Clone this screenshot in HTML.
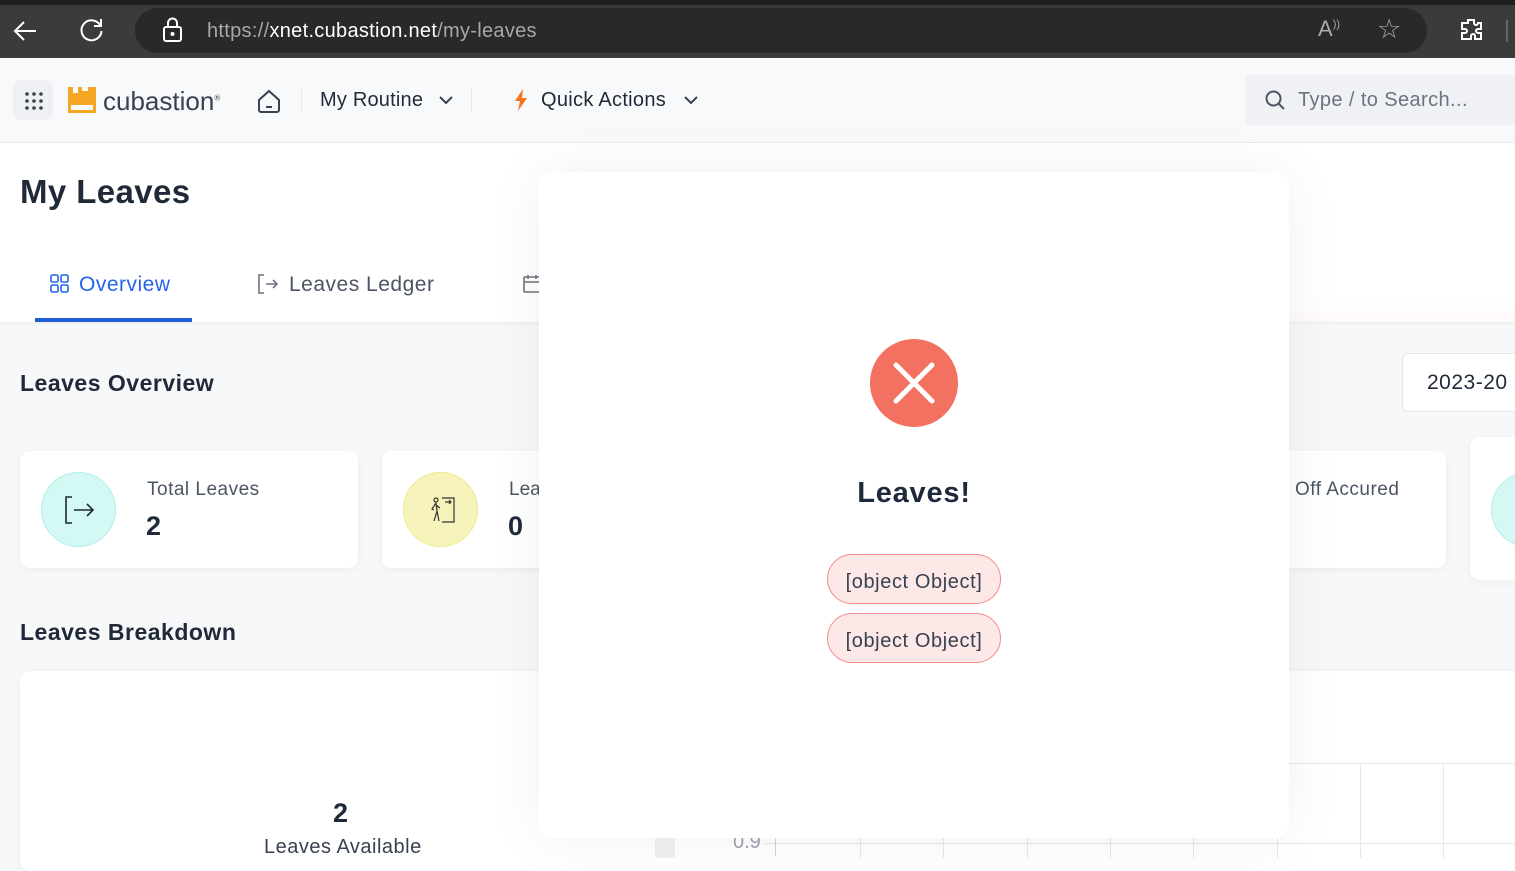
<!DOCTYPE html>
<html><head><meta charset="utf-8"><style>
*{box-sizing:border-box;margin:0;padding:0}
body{width:1515px;height:856px;overflow:hidden;position:relative;font-family:"Liberation Sans",sans-serif;background:#f7f8fa;color:#1f2937}
.abs{position:absolute;white-space:nowrap}
.top{left:0;top:0;width:1515px;height:58px;background:#3b3b3b;border-top:5px solid #1e1e1e}
.pill{left:135px;top:8px;width:1292px;height:45px;border-radius:23px;background:#292929}
.url{left:207px;top:20px;font-size:20px;color:#a8a8a8}
.hdr{left:0;top:58px;width:1515px;height:85px;background:#f8f9fb;border-bottom:1px solid #e5e7eb}
.white{left:0;top:143px;width:1515px;height:179px;background:#fff;box-shadow:0 2px 3px rgba(0,0,0,.04)}
.card{background:#fff;border-radius:10px;box-shadow:0 2px 8px rgba(0,0,0,.05)}
.t{color:#1f2937}
.ls{letter-spacing:.5px}
</style></head><body>
<div class="abs top"></div>
<div class="abs pill"></div>
<svg class="abs" style="left:12px;top:17px" width="28" height="28" viewBox="0 0 28 28" fill="none" stroke="#fff" stroke-width="2"><path d="M24 14H4M12 5l-9 9 9 9"/></svg>
<svg class="abs" style="left:78px;top:16px" width="28" height="28" viewBox="0 0 28 28" fill="none" stroke="#fff" stroke-width="2"><path d="M22 9a10 10 0 1 0 1.5 6"/><path d="M23 3v7h-7"/></svg>
<svg class="abs" style="left:161px;top:17px" width="24" height="26" viewBox="0 0 24 26" fill="none" stroke="#fff" stroke-width="2"><rect x="3" y="10" width="17" height="14" rx="2"/><path d="M7 10V6a4.5 4.5 0 0 1 9 0v4"/><circle cx="11.5" cy="17" r="1" fill="#fff"/></svg>
<div class="abs url" style="letter-spacing:.3px">https://<span style="color:#fff">xnet.cubastion.net</span>/my-leaves</div>
<div class="abs" style="left:1318px;top:16px;color:#aaa;font-size:22px">A<sup style="font-size:11px">))</sup></div>
<div class="abs" style="left:1377px;top:14px;color:#aaa;font-size:27px">☆</div>
<svg class="abs" style="left:1458px;top:16px" width="28" height="28" viewBox="0 0 28 28" fill="none" stroke="#fff" stroke-width="2"><path d="M10 4h6v3a2 2 0 0 0 4 0h3v6h-3a2 2 0 0 0 0 4h3v6h-6v-3a2 2 0 0 0-4 0v3H4v-6h3a2 2 0 0 0 0-4H4V7h6z"/></svg>
<div class="abs" style="left:1506px;top:20px;width:2px;height:22px;background:#666"></div>

<div class="abs hdr"></div>
<div class="abs" style="left:13px;top:80px;width:40px;height:40px;border-radius:8px;background:#eef0f3"></div>
<svg class="abs" style="left:24px;top:91px" width="20" height="20" viewBox="0 0 20 20" fill="#374151"><circle cx="3" cy="3" r="1.8"/><circle cx="10" cy="3" r="1.8"/><circle cx="17" cy="3" r="1.8"/><circle cx="3" cy="10" r="1.8"/><circle cx="10" cy="10" r="1.8"/><circle cx="17" cy="10" r="1.8"/><circle cx="3" cy="17" r="1.8"/><circle cx="10" cy="17" r="1.8"/><circle cx="17" cy="17" r="1.8"/></svg>
<svg class="abs" style="left:68px;top:87px" width="30" height="26" viewBox="0 0 30 26" fill="#f5a623"><path d="M0 0h5v6h5V0h4v4h6V0h8v26H0zM3 18v5h22v-5z" fill-rule="evenodd"/></svg>
<div class="abs" style="left:103px;top:86px;font-size:26px;color:#374151">cubastion<sup style="font-size:8px">®</sup></div>
<svg class="abs" style="left:256px;top:88px" width="26" height="26" viewBox="0 0 26 26" fill="none" stroke="#374151" stroke-width="2"><path d="M3 12l10-9 10 9v10a2 2 0 0 1-2 2H5a2 2 0 0 1-2-2z"/><path d="M10 19h6"/></svg>
<div class="abs" style="left:301px;top:88px;width:1px;height:24px;background:#e5e7eb"></div>
<div class="abs" style="left:320px;top:89px;font-size:20px;color:#1f2937;letter-spacing:.2px">My Routine</div>
<svg class="abs" style="left:438px;top:94px" width="16" height="12" viewBox="0 0 16 12" fill="none" stroke="#374151" stroke-width="2"><path d="M2 3l6 6 6-6"/></svg>
<div class="abs" style="left:471px;top:88px;width:1px;height:24px;background:#e5e7eb"></div>
<svg class="abs" style="left:514px;top:89px" width="14" height="22" viewBox="0 0 14 22" fill="#f97316"><path d="M9 0L1 12h5l-2 10 9-13H8z"/></svg>
<div class="abs" style="left:541px;top:89px;font-size:20px;color:#1f2937;letter-spacing:.3px">Quick Actions</div>
<svg class="abs" style="left:683px;top:94px" width="16" height="12" viewBox="0 0 16 12" fill="none" stroke="#374151" stroke-width="2"><path d="M2 3l6 6 6-6"/></svg>
<div class="abs" style="left:1245px;top:75px;width:280px;height:50px;border-radius:6px;background:#eff1f5"></div>
<svg class="abs" style="left:1263px;top:88px" width="24" height="24" viewBox="0 0 24 24" fill="none" stroke="#4b5563" stroke-width="2"><circle cx="10.5" cy="10.5" r="7"/><path d="M16 16l5 5"/></svg>
<div class="abs" style="left:1298px;top:89px;font-size:20px;color:#6b7280;letter-spacing:.4px">Type / to Search...</div>

<div class="abs white"></div>
<div class="abs t" style="left:20px;top:173px;font-size:33px;font-weight:bold;letter-spacing:.4px">My Leaves</div>
<svg class="abs" style="left:50px;top:274px" width="19" height="19" viewBox="0 0 19 19" fill="none" stroke="#2563eb" stroke-width="1.6"><rect x="1" y="1" width="7" height="7" rx="1.5"/><rect x="11" y="1" width="7" height="7" rx="1.5"/><rect x="1" y="11" width="7" height="7" rx="1.5"/><rect x="11" y="11" width="7" height="7" rx="1.5"/></svg>
<div class="abs ls" style="left:79px;top:273px;font-size:21px;color:#2563eb">Overview</div>
<div class="abs" style="left:35px;top:318px;width:157px;height:4px;background:#1d5fd3"></div>
<svg class="abs" style="left:257px;top:273px" width="22" height="22" viewBox="0 0 22 22" fill="none" stroke="#6b7280" stroke-width="1.6"><path d="M7 2H2v18h5M9 11h11M16 7l4 4-4 4"/></svg>
<div class="abs ls" style="left:289px;top:273px;font-size:21px;color:#4b5563">Leaves Ledger</div>
<svg class="abs" style="left:522px;top:274px" width="20" height="20" viewBox="0 0 20 20" fill="none" stroke="#6b7280" stroke-width="1.6"><rect x="2" y="3" width="16" height="15" rx="1"/><path d="M2 8h16M6 1v4M14 1v4"/></svg>
<div class="abs" style="left:1290px;top:300px;width:225px;height:22px;background:linear-gradient(#fff,#fffafa)"></div>

<div class="abs t ls" style="left:20px;top:370px;font-size:23px;font-weight:bold">Leaves Overview</div>
<div class="abs" style="left:1402px;top:353px;width:130px;height:59px;background:#fff;border:1px solid #e5e7eb;border-radius:6px"></div>
<div class="abs ls" style="left:1427px;top:371px;font-size:21px;color:#1f2937">2023-20</div>

<div class="abs card" style="left:20px;top:451px;width:338px;height:117px"></div>
<div class="abs" style="left:41px;top:472px;width:75px;height:75px;border-radius:50%;background:#d4f8f4;border:1px solid #b3efe8"></div>
<svg class="abs" style="left:63px;top:494px" width="32" height="32" viewBox="0 0 32 32" fill="none" stroke="#1f2937" stroke-width="1.6"><path d="M9 3H3v26h6M11 16h19M24 10l6 6-6 6"/></svg>
<div class="abs ls" style="left:147px;top:479px;font-size:19px;color:#4b5563">Total Leaves</div>
<div class="abs t" style="left:146px;top:511px;font-size:27px;font-weight:bold">2</div>
<div class="abs card" style="left:382px;top:451px;width:200px;height:117px"></div>
<div class="abs" style="left:403px;top:472px;width:75px;height:75px;border-radius:50%;background:#f7f4bb;border:1px solid #efe98e"></div>
<svg class="abs" style="left:428px;top:496px" width="28" height="28" viewBox="0 0 28 28" fill="none" stroke="#333" stroke-width="1.2"><path d="M14 2h12v24H14M17 6h6M21 4l2 2-2 2"/><circle cx="8" cy="4" r="2"/><path d="M8 7l-4 6 2 1M8 7l1 8-3 10M9 15l2 10M8 9l4 3"/></svg>
<div class="abs" style="left:509px;top:479px;font-size:19px;color:#4b5563">Lea</div>
<div class="abs t" style="left:508px;top:511px;font-size:27px;font-weight:bold">0</div>
<div class="abs card" style="left:1200px;top:451px;width:246px;height:117px"></div>
<div class="abs ls" style="left:1295px;top:479px;font-size:19px;color:#4b5563">Off Accured</div>
<div class="abs card" style="left:1470px;top:437px;width:80px;height:143px"></div>
<div class="abs" style="left:1491px;top:472px;width:75px;height:75px;border-radius:50%;background:#d4f8f4;border:1px solid #b3efe8"></div>

<div class="abs t ls" style="left:20px;top:619px;font-size:23px;font-weight:bold">Leaves Breakdown</div>
<div class="abs card" style="left:20px;top:671px;width:1520px;height:200px"></div>
<div class="abs" style="left:655px;top:838px;width:20px;height:20px;background:#f0f1f3"></div>
<div class="abs t" style="left:333px;top:798px;font-size:27px;font-weight:bold">2</div>
<div class="abs ls" style="left:264px;top:836px;font-size:20px;color:#374151">Leaves Available</div>
<div class="abs" style="left:733px;top:831px;font-size:20px;color:#9ca3af">0.9</div>
<div class="abs" style="left:765px;top:843px;width:760px;height:1px;background:#e5e7eb"></div>
<div class="abs" style="left:1289px;top:763px;width:230px;height:1px;background:#e5e7eb"></div>
<div class="abs" style="left:775px;top:836px;width:1px;height:20px;background:#d1d5db"></div>
<div class="abs" style="left:860px;top:838px;width:1px;height:20px;background:#e5e7eb"></div>
<div class="abs" style="left:943px;top:838px;width:1px;height:20px;background:#e5e7eb"></div>
<div class="abs" style="left:1027px;top:838px;width:1px;height:20px;background:#e5e7eb"></div>
<div class="abs" style="left:1110px;top:838px;width:1px;height:20px;background:#e5e7eb"></div>
<div class="abs" style="left:1193px;top:838px;width:1px;height:20px;background:#e5e7eb"></div>
<div class="abs" style="left:1277px;top:838px;width:1px;height:20px;background:#e5e7eb"></div>
<div class="abs" style="left:1360px;top:763px;width:1px;height:95px;background:#e5e7eb"></div>
<div class="abs" style="left:1443px;top:763px;width:1px;height:95px;background:#e5e7eb"></div>

<div class="abs" style="left:539px;top:172px;width:750px;height:666px;background:#fff;border-radius:14px;box-shadow:0 0 60px rgba(0,0,0,.06)"></div>
<div class="abs" style="left:870px;top:339px;width:88px;height:88px;border-radius:50%;background:#f27160"></div>
<svg class="abs" style="left:870px;top:339px" width="88" height="88" viewBox="0 0 88 88" stroke="#fff" stroke-width="5" stroke-linecap="round"><path d="M26 26l36 36M62 26L26 62"/></svg>
<div class="abs t" style="left:539px;top:477px;width:750px;text-align:center;font-size:29px;font-weight:bold;color:#1e293b;letter-spacing:.8px">Leaves!</div>
<div class="abs" style="left:827px;top:554px;width:174px;height:50px;border-radius:25px;background:#fde8e8;border:1px solid #f58a8a;text-align:center;line-height:54px;font-size:20px;color:#374151;letter-spacing:.6px">[object Object]</div>
<div class="abs" style="left:827px;top:613px;width:174px;height:50px;border-radius:25px;background:#fde8e8;border:1px solid #f58a8a;text-align:center;line-height:54px;font-size:20px;color:#374151;letter-spacing:.6px">[object Object]</div>
</body></html>
